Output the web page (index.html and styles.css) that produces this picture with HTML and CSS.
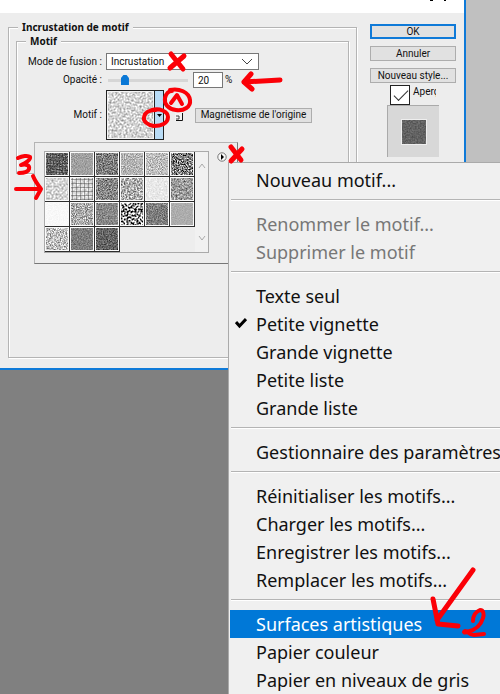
FILE: index.html
```html
<!DOCTYPE html>
<html lang="fr">
<head>
<meta charset="utf-8">
<title>Incrustation de motif</title>
<link rel="stylesheet" href="styles.css">
</head>
<body>
<main class="dialog">
  <div class="titlebar">
    <svg class="title-marks" width="30" height="3" viewBox="0 0 30 3" aria-hidden="true"><path d="M1 0h3v1H1zM15 0h2v1h-2z"/></svg>
  </div>
  <div class="dialog-body">
    <fieldset class="group outer">
      <legend>Incrustation de motif</legend>
      <fieldset class="group inner">
        <legend>Motif</legend>
        <div class="form">
          <label for="mode">Mode de fusion :</label>
          <div class="select-wrap">
            <select id="mode"><option>Incrustation</option></select>
            <svg class="chevron" width="12" height="8" viewBox="0 0 12 8" aria-hidden="true"><path d="M1 1l5 5 5-5"/></svg>
          </div>
          <label for="opacity">Opacité :</label>
          <div class="row">
            <input class="slider" id="opacity" type="range" min="0" max="100" value="18" aria-label="Opacité">
            <input class="number" type="text" value="20" aria-label="Pourcentage"><span class="unit">%</span>
          </div>
          <label for="pattern">Motif :</label>
          <div class="row">
            <button class="pattern" id="pattern" aria-label="Choisir un motif">
              <span class="pattern-image" data-noise="0.5,212,110"></span>
              <span class="pattern-drop"><svg width="5" height="3" viewBox="0 0 5 3"><path d="M0 0h5L2.500 3z"/></svg></span>
            </button>
            <button class="new-pattern" aria-label="Nouveau motif"><svg width="10" height="10" viewBox="0 0 10 10"><path d="M1 1h8v8H1z" fill="#f4f4f4"/><path d="M2 4h3v3H2" fill="none" stroke="#444"/><path d="M8.500 1v7.500H2" fill="none" stroke="#111"/></svg></button>
            <button class="button snap">Magnétisme de l'origine</button>
          </div>
        </div>
      </fieldset>
    </fieldset>
    <aside class="actions">
      <button class="button ok">OK</button>
      <button class="button">Annuler</button>
      <button class="button">Nouveau style...</button>
      <label class="preview-toggle"><input type="checkbox" checked><span>Aperçu</span></label>
      <div class="preview"><span class="preview-image" data-noise="0.6,98,35"></span></div>
    </aside>
  </div>
  <section class="picker" aria-label="Motifs">
    <div class="picker-list">
      <div class="swatches"></div>
      <div class="scroll">
        <svg width="8" height="6" viewBox="0 0 8 6"><path d="M1 5l3-4 3 4"/></svg>
        <svg width="8" height="6" viewBox="0 0 8 6"><path d="M1 1l3 4 3-4"/></svg>
      </div>
    </div>
    <button class="flyout" aria-label="Menu"><svg width="10" height="10" viewBox="0 0 10 10"><circle cx="5" cy="5" r="4.200" fill="#f8f8f8" stroke="#777"/><path d="M4 2l3 3-3 3z"/></svg></button>
  </section>
</main>
<nav class="menu">
  <button>Nouveau motif...</button>
  <hr>
  <button disabled>Renommer le motif...</button>
  <button disabled>Supprimer le motif</button>
  <hr>
  <button>Texte seul</button>
  <button class="checked"><svg class="tick" width="12" height="12" viewBox="0 0 12 12" aria-hidden="true"><path d="M1 5l3.500 4L11 2"/></svg>Petite vignette</button>
  <button>Grande vignette</button>
  <button>Petite liste</button>
  <button>Grande liste</button>
  <hr>
  <button>Gestionnaire des paramètres</button>
  <hr>
  <button>Réinitialiser les motifs...</button>
  <button>Charger les motifs...</button>
  <button>Enregistrer les motifs...</button>
  <button>Remplacer les motifs...</button>
  <hr>
  <button class="selected">Surfaces artistiques</button>
  <button>Papier couleur</button>
  <button>Papier en niveaux de gris</button>
</nav>
<svg class="notes" width="500" height="694" viewBox="0 0 500 694" aria-hidden="true">
  <g stroke-width="5">
    <path d="M171 54l12 15M184 56l-14 12"/>
    <path d="M231 147l10 13M242 149l-11 12"/>
  </g>
  <path stroke-width="5" d="M280 80l-36 2M251 74l-7 8 8 7"/>
  <g stroke-width="4">
    <path d="M152 110c7-2 16 1 16 7 0 7-8 9-14 9-7-1-11-5-10-9 1-5 6-7 12-7"/>
    <path d="M170 90c9-2 19 2 20 10 1 7-6 11-14 10-8-1-12-6-11-12 1-4 3-7 7-7"/>
    <path d="M171 103l6-8 5 9"/>
    <path d="M18 158c4-2 10-3 12-1 1 3-5 6-9 8 5-1 9 0 8 4-1 3-6 4-10 4"/>
    <path d="M16 189h23M33 176c2 5 5 9 8 13l-5 9"/>
  </g>
  <path stroke-width="5" d="M473 570l-36 50M433 599l5 25 20 2"/>
  <path stroke-width="4" d="M473 621c0-5 2-9 7-11 4 0 4 5 3 8-2 7-7 12-16 14-3 1-4 0-2-1 3 0 4 4 9 4l10-1"/>
</svg>
<script src="script.js"></script>
</body>
</html>
```

FILE: styles.css
```css
* { box-sizing: border-box; }

body {
  margin: 0;
  min-height: 100vh;
  overflow: hidden;
  position: relative;
  background: linear-gradient(#c0c0c0 162px, #808080 162px);
  font: 10px/14px Roboto, sans-serif;
  color: #111;
}

button, input, select { font: inherit; color: inherit; margin: 0; }
button { padding: 0; border: 0; background: none; }

.dialog {
  position: relative;
  width: calc(100% - 34px);
  background: #ededed;
  border: solid #0f7ad8;
  border-width: 0 2px 2px 0;
}

.titlebar {
  display: flex;
  justify-content: flex-end;
  height: 13px;
  padding-right: 5px;
  background: #fff;
}

.dialog-body {
  display: flex;
  gap: 13px;
  padding: 7px 8px 10px;
}

.group {
  min-width: 0;
  margin: 0;
  padding: 0;
  border: 1px solid #b4b4b4;
  box-shadow: 1px 1px 0 #fff, inset 1px 1px 0 #fff;
}

.group > legend {
  padding: 0 4px;
  background: #ededed;
  font-family: "Noto Sans", sans-serif;
  font-weight: bold;
  line-height: 14px;
}

.outer { flex: 1; padding: 0 7px 183px; }
.outer > legend { margin-left: 2px; }
.inner > legend { margin-left: 9px; }
.inner { padding: 5px 0 33px; }

.form {
  display: grid;
  grid-template-columns: 85px 1fr;
  column-gap: 4px;
  row-gap: 2px;
  align-items: center;
}

.form > label { text-align: right; white-space: nowrap; }
.row { display: flex; align-items: center; }

.select-wrap { position: relative; width: 153px; height: 17px; }
.select-wrap select {
  display: block;
  width: 100%;
  height: 100%;
  padding: 0 4px;
  appearance: none;
  border: 1px solid #777;
  border-radius: 0;
  background: #fff;
}
.chevron { position: absolute; right: 6px; top: 5px; fill: none; stroke: #444; }

.slider {
  width: 80px;
  height: 16px;
  margin: 0 5px 0 2px;
  appearance: none;
  background: linear-gradient(#d6d6d6, #d6d6d6) center / 100% 3px no-repeat;
}
.slider::-webkit-slider-thumb {
  appearance: none;
  width: 8px;
  height: 10px;
  background: #0a78d6;
  clip-path: polygon(0 30%, 30% 0, 70% 0, 100% 30%, 100% 100%, 0 100%);
}

.number {
  width: 30px;
  height: 16px;
  padding: 0 4px;
  border: 1px solid #777;
  background: #fff;
}
.unit { margin-left: 2px; }

.pattern {
  display: flex;
  width: 58px;
  height: 50px;
  border: 1px solid #222;
  background: #f4f4f4;
}
.pattern-image {
  flex: 1;
  align-self: stretch;
  height: 46px;
  margin: 1px;
  overflow: hidden;
}
.pattern-drop {
  display: flex;
  align-items: center;
  justify-content: center;
  width: 9px;
  border-left: 1px solid #222;
  background: #b9dcf6;
}

.new-pattern { width: 10px; height: 10px; margin: 3px 11px 0 10px; }
.new-pattern svg, .flyout svg, .noise { display: block; }

.button {
  height: 15px;
  border: 1px solid #adadad;
  background: #e1e1e1;
  line-height: 12px;
  white-space: nowrap;
}
.snap { width: 117px; }

.actions {
  display: flex;
  flex-direction: column;
  gap: 7px;
  width: 86px;
  margin-top: 4px;
}
.ok { border: 2px solid #0f7ad8; line-height: 11px; }

.preview-toggle {
  display: flex;
  gap: 3px;
  width: 46px;
  margin: -5px 0 -7px 20px;
  overflow: hidden;
}
.preview-toggle input {
  flex: none;
  width: 20px;
  height: 20px;
  appearance: none;
  border: 1px solid #222;
  background: #fff;
}
.preview-toggle input:checked::before {
  content: "";
  display: block;
  width: 13px;
  height: 6px;
  margin: 4px 0 0 3px;
  border: solid #333;
  border-width: 0 0 1px 1px;
  transform: rotate(-45deg);
}

.preview {
  display: flex;
  align-items: center;
  justify-content: center;
  width: 52px;
  height: 52px;
  margin-left: 17px;
  border: solid #aaa;
  border-width: 1px 0 0 1px;
  background: #d8d8d8;
}
.preview-image {
  width: 26px;
  height: 26px;
  overflow: hidden;
  border: 1px solid #eee;
}

.picker {
  position: absolute;
  left: 34px;
  top: 142px;
  display: flex;
  align-items: flex-start;
  gap: 8px;
  width: 204px;
  padding: 8px 9px 10px;
  border: 1px solid #b4b4b4;
  border-right-color: #777;
  border-bottom-color: #777;
  background: #ededed;
}
.picker-list {
  display: flex;
  width: 165px;
  border: 1px solid #aaa;
}
.swatches {
  display: grid;
  grid-template-columns: repeat(6, 25px);
  grid-auto-rows: 25px;
}
.swatch {
  border: solid #2d2d2d;
  border-width: 0 1px 1px 0;
  padding: 1px;
  background: #fafafa;
}
.swatch-image { height: 22px; overflow: hidden; }
.scroll {
  display: flex;
  flex: 1;
  flex-direction: column;
  align-items: center;
  justify-content: space-between;
  padding: 11px 0;
  background: #f1f1f1;
}
.scroll svg { fill: none; stroke: #aaa; }
.flyout { margin: 1px 0 0; }

.menu {
  position: absolute;
  top: 162px;
  bottom: 0;
  left: 228px;
  right: 0;
  padding: 3px 0 0 1px;
  overflow: hidden;
  border: solid #aaa;
  border-width: 1px 0 0 1px;
  background: #f0f0f0;
  font-family: "Noto Sans", sans-serif;
  font-size: 18px;
  line-height: 28px;
  color: #111;
}
.menu button {
  position: relative;
  display: block;
  width: 100%;
  height: 28px;
  padding-left: 26px;
  text-align: left;
  white-space: nowrap;
}
.menu button:disabled { color: #777; }
.menu .selected { background: #0078d7; color: #fff; }
.menu hr {
  height: 2px;
  margin: 5px 0 9px 1px;
  border: solid #b4b4b4;
  border-width: 1px 0 0;
  background: #fff;
}
.tick { position: absolute; left: 5px; top: 7px; fill: none; stroke: #000; stroke-width: 3; }

.notes {
  position: absolute;
  left: 0;
  top: 0;
  pointer-events: none;
  fill: none;
  stroke: #fb0007;
  stroke-linecap: round;
  stroke-linejoin: round;
}
```

FILE: script.js
```js
// Each texture: noise frequency, mean grey, contrast, optional line spacing of a weave
const textures = [
  "0.8,110,140,3", "0.9,160,50", "0.8,125,140", "0.9,180,90", "0.9,190,110", "0.8,125,260",
  "0.5,212,90", "0.5,222,60,4", "0.8,135,130", "0.6,175,160", "0.6,232,35", "0.6,155,130",
  "0.8,248,10", "0.9,170,140", "0.8,135,80", "0.5,140,480", "0.8,125,100", "0.9,172,25",
  "0.7,190,160", "0.8,125,60", "0.8,100,90"
];

let count = 0;

function noise(spec) {
  const [frequency, mean, contrast, weave] = spec.split(",").map(Number);
  const id = "noise" + count++;
  const gain = contrast / 128;
  const offset = mean / 255 - gain / 2;
  const row = `${gain} 0 0 0 ${offset} `;
  let lines = "";
  if (weave) {
    for (let i = 1; i < 60; i += weave) {
      lines += `M${i}.5 0v60M0 ${i}.5h60`;
    }
  }
  return `<svg class="noise" width="60" height="60" aria-hidden="true">
    <filter id="${id}" x="0" y="0" width="100%" height="100%" color-interpolation-filters="sRGB">
      <feTurbulence type="fractalNoise" baseFrequency="${frequency}" numOctaves="2" seed="${count}"/>
      <feColorMatrix values="${row}${row}${row}0 0 0 0 1"/>
    </filter>
    <rect width="60" height="60" filter="url(#${id})"/>
    <path d="${lines}" stroke="#333" stroke-opacity=".4"/>
  </svg>`;
}

document.querySelectorAll("[data-noise]").forEach((el) => {
  el.innerHTML = noise(el.dataset.noise);
});

document.querySelector(".swatches").innerHTML = textures
  .map((spec) => `<div class="swatch"><div class="swatch-image">${noise(spec)}</div></div>`)
  .join("");
```
